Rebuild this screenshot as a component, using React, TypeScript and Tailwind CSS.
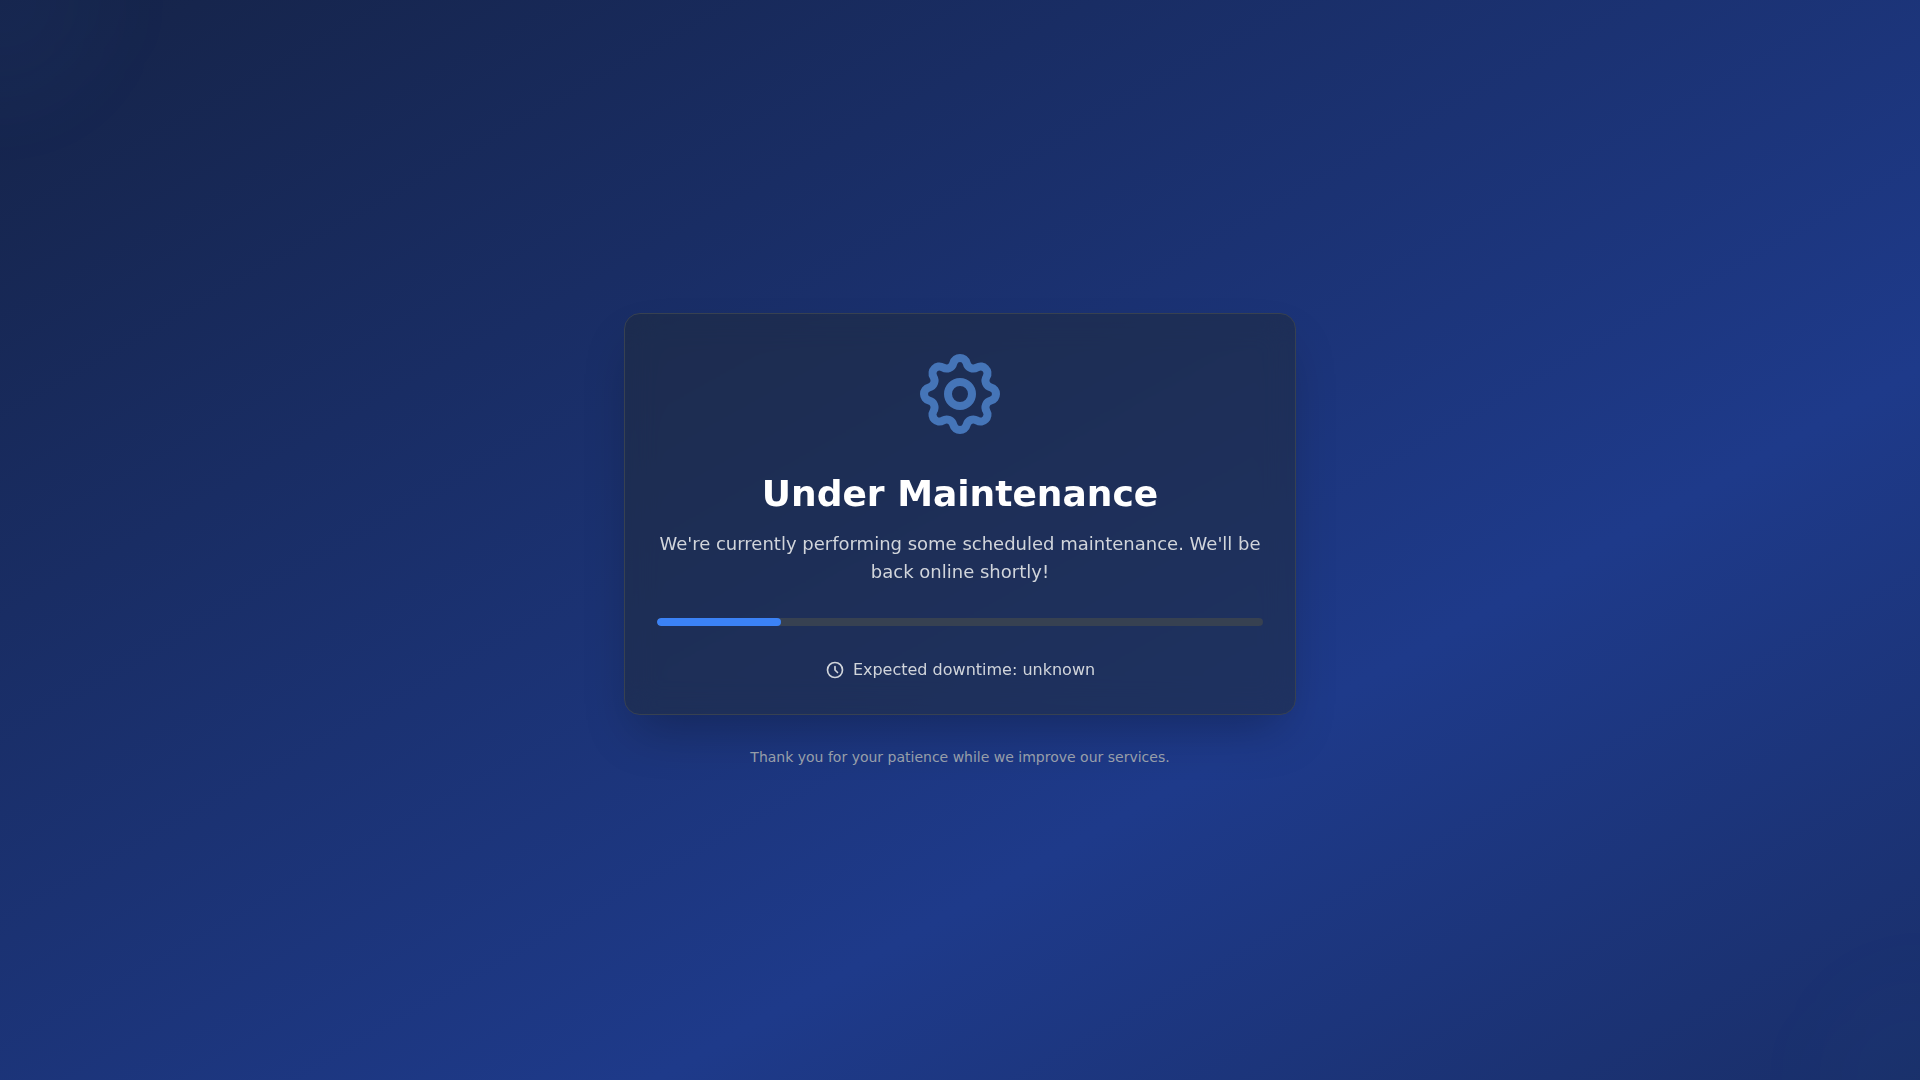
import React from "react";

const progress = 20.4;

function CogIcon() {
  return (
    <svg
      className="h-24 w-24 text-[#60a5fa] opacity-60"
      fill="none"
      stroke="currentColor"
      strokeWidth={2}
      strokeLinecap="round"
      strokeLinejoin="round"
      viewBox="0 0 24 24"
      aria-hidden="true"
    >
      <path d="M10.325 4.317c.426-1.756 2.924-1.756 3.35 0a1.724 1.724 0 002.573 1.066c1.543-.94 3.31.826 2.37 2.37a1.724 1.724 0 001.065 2.572c1.756.426 1.756 2.924 0 3.35a1.724 1.724 0 00-1.066 2.573c.94 1.543-.826 3.31-2.37 2.37a1.724 1.724 0 00-2.572 1.065c-.426 1.756-2.924 1.756-3.35 0a1.724 1.724 0 00-2.573-1.066c-1.543.94-3.31-.826-2.37-2.37a1.724 1.724 0 00-1.065-2.572c-1.756-.426-1.756-2.924 0-3.35a1.724 1.724 0 001.066-2.573c-.94-1.543.826-3.31 2.37-2.37.996.608 2.296.07 2.572-1.065z" />
      <path d="M15 12a3 3 0 11-6 0 3 3 0 016 0z" />
    </svg>
  );
}

function ClockIcon() {
  return (
    <svg
      className="h-5 w-5"
      fill="none"
      stroke="currentColor"
      strokeWidth={2}
      strokeLinecap="round"
      strokeLinejoin="round"
      viewBox="0 0 24 24"
      aria-hidden="true"
    >
      <path d="M12 8v4l3 3m6-3a9 9 0 11-18 0 9 9 0 0118 0z" />
    </svg>
  );
}

export default function App() {
  return (
    <main className="relative flex min-h-screen flex-col items-center justify-center overflow-hidden bg-[linear-gradient(to_bottom_right,#111827,#1e3a8a,#111827)] bg-[length:200%_200%] bg-[position:16%_50%] p-4 font-['DejaVu_Sans',sans-serif]">
      {/* Corner glows */}
      <div className="absolute top-0 left-0 h-52 w-52 -translate-x-1/2 -translate-y-1/2 rounded-full bg-[#3b82f6]/4 blur-2xl" />
      <div className="absolute right-0 bottom-0 h-52 w-52 translate-x-1/2 translate-y-1/2 rounded-full bg-[#3b82f6]/2 blur-2xl" />

      {/* Card */}
      <div className="relative w-full max-w-2xl rounded-2xl border border-[#374151] bg-[#1f2937]/50 p-8 text-center shadow-2xl backdrop-blur-lg">
        <div className="mb-8 flex justify-center">
          <CogIcon />
        </div>

        <h1 className="mb-4 text-4xl font-bold text-white">Under Maintenance</h1>
        <p className="mb-8 text-lg text-[#d1d5db]">
          We're currently performing some scheduled maintenance. We'll be back
          online shortly!
        </p>

        {/* Progress bar */}
        <div
          role="progressbar"
          aria-label="Maintenance progress"
          aria-valuenow={progress}
          className="mb-8 h-2 w-full overflow-hidden rounded-full bg-[#374151]"
        >
          <div
            className="h-full rounded-full bg-[#3b82f6]"
            style={{ width: `${progress}%` }}
          />
        </div>

        <div className="flex items-center justify-center gap-2 text-[#d1d5db]">
          <ClockIcon />
          <span>Expected downtime: unknown</span>
        </div>
      </div>

      <p className="mt-8 text-center text-sm text-[#9ca3af]">
        Thank you for your patience while we improve our services.
      </p>
    </main>
  );
}
